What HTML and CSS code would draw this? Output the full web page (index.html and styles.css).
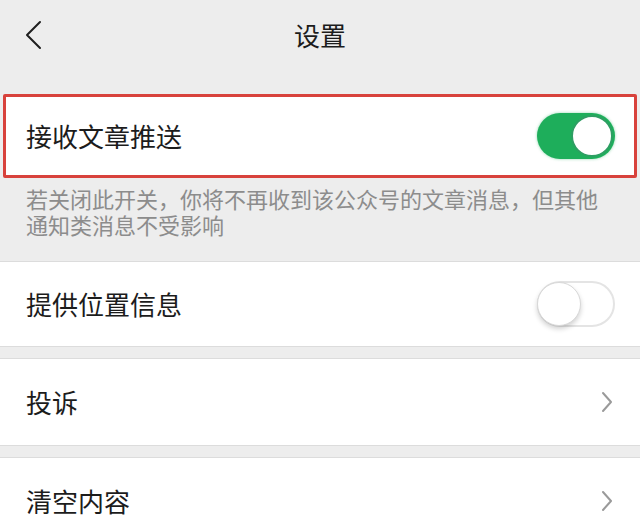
FILE: index.html
```html
<!DOCTYPE html>
<html lang="zh">
<head>
<meta charset="utf-8">
<link rel="stylesheet" href="styles.css">
</head>
<body>
<div class="page">
  <header class="topbar">
    <svg class="back" width="20" height="32" viewBox="0 0 20 32"><path d="M16 3 L3 16 L16 29" fill="none" stroke="#1f1f1f" stroke-width="2" stroke-linecap="round" stroke-linejoin="round"/></svg>
    <div class="title">设置</div>
  </header>

  <div class="row highlight">
    <span class="label">接收文章推送</span>
    <span class="switch on"><span class="knob"></span></span>
  </div>
  <p class="note">若关闭此开关，你将不再收到该公众号的文章消息，但其他通知类消息不受影响</p>

  <div class="row bordered">
    <span class="label">提供位置信息</span>
    <span class="switch off"><span class="knob"></span></span>
  </div>

  <div class="row bordered gap">
    <span class="label">投诉</span>
    <svg class="chev" width="12" height="22" viewBox="0 0 12 22"><path d="M2 2 L10 11 L2 20" fill="none" stroke="#9a9a9a" stroke-width="2" stroke-linecap="round" stroke-linejoin="round"/></svg>
  </div>

  <div class="row bordered gap">
    <span class="label">清空内容</span>
    <svg class="chev" width="12" height="22" viewBox="0 0 12 22"><path d="M2 2 L10 11 L2 20" fill="none" stroke="#9a9a9a" stroke-width="2" stroke-linecap="round" stroke-linejoin="round"/></svg>
  </div>
</div>
</body>
</html>
```

FILE: styles.css
```css
html, body {
  margin: 0;
  padding: 0;
  background: #ededed;
}
body {
  font-family: "Noto Sans CJK SC", "Noto Sans", sans-serif;
  color: #1c1c1c;
  width: 640px;
  height: 518px;
  overflow: hidden;
}
.page {
  display: flex;
  flex-direction: column;
}
.topbar {
  position: relative;
  height: 72px;
  display: flex;
  align-items: center;
  justify-content: center;
  margin-bottom: 22px;
}
.back {
  position: absolute;
  left: 24px;
  top: 19px;
}
.title {
  font-size: 26px;
  line-height: 36px;
  color: #1c1c1c;
  margin-bottom: 3px;
}
.row {
  background: #fff;
  display: flex;
  align-items: center;
  justify-content: space-between;
  height: 85px;
  box-sizing: border-box;
  padding: 0 25px 0 26px;
}
.label {
  font-size: 26px;
  line-height: 36px;
  color: #1c1c1c;
}
.highlight {
  height: 84px;
  margin: 0 3px;
  border: 3px solid #d8423c;
  border-radius: 2px;
  padding: 0 19px 0 20px;
}
.note {
  margin: 0;
  padding: 7px 30px 24px 26px;
  font-size: 22px;
  line-height: 26px;
  color: #8c8c8c;
}
.bordered {
  border-top: 1px solid #dcdcdc;
  border-bottom: 1px solid #dcdcdc;
  height: 86px;
}
.gap {
  margin-top: 11px;
  height: 88px;
}
.switch {
  width: 78px;
  height: 46px;
  border-radius: 23px;
  box-sizing: border-box;
  display: flex;
  align-items: center;
  padding: 2px;
}
.switch.on {
  background: #1eae5b;
  justify-content: flex-end;
  box-shadow: 0 0 3px rgba(30, 174, 91, 0.5);
}
.switch.off {
  background: #fff;
  border: 2px solid #e4e4e4;
  justify-content: flex-start;
  padding: 0;
}
.knob {
  width: 42px;
  height: 42px;
  border-radius: 50%;
  background: #fff;
  box-sizing: border-box;
}
.on .knob {
  border: 2px solid #2e9e63;
}
.off .knob {
  width: 44px;
  height: 44px;
  margin-left: -2px;
  border: 1px solid #d8d8d8;
  box-shadow: 0 3px 5px rgba(0, 0, 0, 0.18);
}
.chev {
  margin-right: 2px;
}
```
